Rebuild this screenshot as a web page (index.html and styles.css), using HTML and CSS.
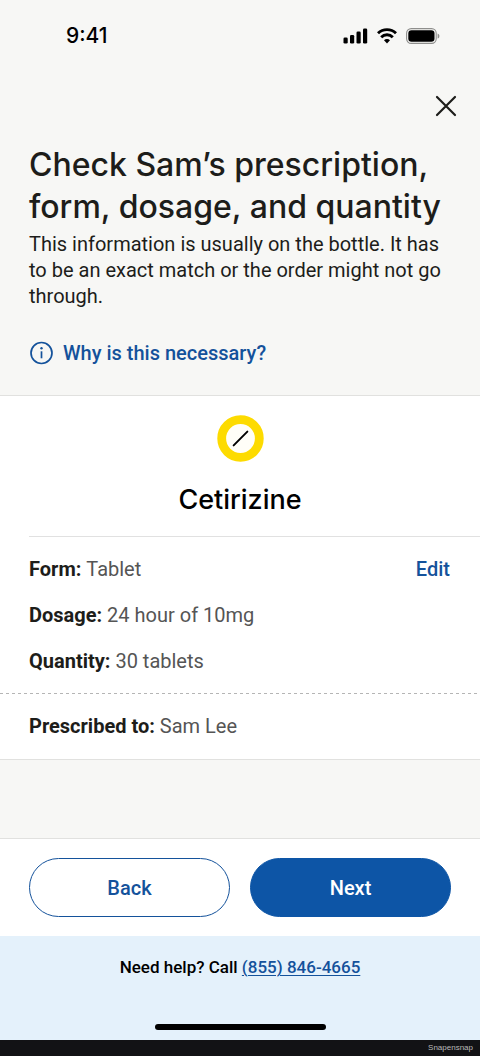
FILE: index.html
```html
<!DOCTYPE html>
<html lang="en">
<head>
<meta charset="utf-8">
<meta name="viewport" content="width=device-width, initial-scale=1">
<title>Check prescription</title>
<link rel="stylesheet" href="styles.css">
</head>
<body>
<div class="screen">
  <div class="status">
    <span class="time">9:41</span>
    <div class="status-icons">
      <svg width="25" height="16" viewBox="0 0 25 16" aria-hidden="true"><rect x="0.500" y="9.500" width="4.200" height="6" rx="1.300"/><rect x="7" y="7" width="4.200" height="8.500" rx="1.300"/><rect x="13.500" y="3.500" width="4.200" height="12" rx="1.300"/><rect x="20" y="0.500" width="4.200" height="15" rx="1.300"/></svg>
      <svg width="20" height="16" viewBox="0 0 20 16" aria-hidden="true"><g fill="none" stroke="#000" stroke-width="2.900"><path d="M1 5.300a12.800 12.800 0 0 1 18 0"/><path d="M4.200 9.200a8.200 8.200 0 0 1 11.600 0"/></g><path d="M7 12.200a4.200 4.200 0 0 1 6 0L10 15.400z"/></svg>
      <svg width="34" height="16" viewBox="0 0 34 16" aria-hidden="true"><rect x="0.600" y="0.600" width="29.600" height="14.800" rx="4.600" fill="none" stroke="#8f8f8d" stroke-width="1.100"/><rect x="2.300" y="2.300" width="26.200" height="11.400" rx="3.200"/><path d="M31.600 5.400c2.400.9 2.400 4.300 0 5.200z" fill="#8f8f8d"/></svg>
    </div>
  </div>
  <header class="intro">
    <button class="close" aria-label="Close"><svg width="22" height="22" viewBox="0 0 22 22" fill="none" stroke="#1d1d1a" stroke-width="2.200" stroke-linecap="round"><path d="M2 2l18 18M20 2L2 20"/></svg></button>
    <h1>Check Sam’s prescription, form, dosage, and quantity</h1>
    <p>This information is usually on the bottle. It has to be an exact match or the order might not go through.</p>
    <a class="why" href="#"><svg width="24" height="24" viewBox="0 0 24 24" fill="none" stroke="#14529b" aria-hidden="true"><circle cx="12.500" cy="12" r="10.500" stroke-width="1.700"/><path d="M12.500 10.300v7" stroke-width="1.700"/><circle cx="12.500" cy="7.300" r="1.200" fill="#14529b" stroke="none"/></svg>Why is this necessary?</a>
  </header>
  <main class="card">
    <div class="drug">
      <svg width="47" height="47" viewBox="0 0 48 48" aria-hidden="true"><circle cx="24" cy="24" r="19.200" fill="#fffef8" stroke="#fddb00" stroke-width="9"/><path d="M17 31L31 17" stroke="#000" stroke-width="2" stroke-linecap="round"/></svg>
      <h2>Cetirizine</h2>
    </div>
    <div class="details">
      <dl>
        <div><dt>Form:</dt> <dd>Tablet</dd></div>
        <div><dt>Dosage:</dt> <dd>24 hour of 10mg</dd></div>
        <div><dt>Quantity:</dt> <dd>30 tablets</dd></div>
      </dl>
      <a class="edit" href="#">Edit</a>
    </div>
    <svg class="dash" height="1" aria-hidden="true"><line x1="0" y1="0.500" x2="100%" y2="0.500" stroke="#b5b5b5" stroke-dasharray="3 3"/></svg>
    <dl class="patient"><div><dt>Prescribed to:</dt> <dd>Sam Lee</dd></div></dl>
  </main>
  <div class="actions">
    <button class="btn">Back</button>
    <button class="btn primary">Next</button>
  </div>
  <footer class="help">
    <p>Need help? Call <a href="tel:8558464665">(855) 846-4665</a></p>
    <div class="home"></div>
  </footer>
  <div class="credit">Snapensnap</div>
</div>
</body>
</html>
```

FILE: styles.css
```css
* { box-sizing: border-box; }
body, h1, h2, p, dl, dd { margin: 0; }
body {
  background: #f7f7f5;
  color: #1d1d1a;
  font: 20px/26px Roboto, "Liberation Sans", sans-serif;
}
.screen { display: flex; flex-direction: column; min-height: 100vh; }
.status {
  display: flex;
  align-items: center;
  justify-content: space-between;
  height: 72px;
  padding: 0 40px 0 66px;
}
.time { font: 500 21px/26px Inter, sans-serif; color: #000; }
.status-icons { display: flex; gap: 9px; }
.intro {
  display: flex;
  flex-direction: column;
  padding: 23px 29px 29px;
}
.close {
  align-self: flex-end;
  display: flex;
  margin-right: -6px;
  padding: 0;
  border: 0;
  background: none;
}
h1, h2 { font-family: Inter, sans-serif; font-weight: 500; }
h1 { margin: 27px -16px 0 0; font-size: 32px; line-height: 42px; }
.intro p { margin-top: 3px; }
a { color: #14529b; }
.why {
  display: flex;
  align-items: center;
  gap: 10px;
  margin-top: 31px;
  font-weight: 500;
  text-decoration: none;
}
.card {
  border: solid #e1e1df;
  border-width: 1px 0;
  background: #fff;
}
.drug {
  display: flex;
  flex-direction: column;
  align-items: center;
  gap: 20px;
  margin-left: 29px;
  padding: 19px 29px 18px 0;
  border-bottom: 1px solid #e1e1e1;
}
h2 { font-size: 27px; line-height: 36px; color: #000; }
.details {
  display: flex;
  justify-content: space-between;
  padding: 19px 30px 19px 29px;
}
.details dl { display: grid; gap: 20px; }
dt, dd { display: inline; }
dt { font-weight: 700; }
dd { color: #555; }
.edit { font-weight: 500; text-decoration: none; }
.dash { display: block; width: 100%; }
.patient { padding: 19px 29px 20px; }
.actions {
  display: flex;
  gap: 20px;
  margin-top: auto;
  padding: 19px 29px;
  border-top: 1px solid #e1e1df;
  background: #fff;
}
.btn {
  flex: 1;
  height: 59px;
  border: 1px solid #14529b;
  border-radius: 30px;
  background: #fff;
  color: #14529b;
  font: inherit;
  font-weight: 500;
}
.primary { border-color: #0d55a6; background: #0d55a6; color: #fff; }
.help {
  display: flex;
  flex-direction: column;
  align-items: center;
  justify-content: space-between;
  height: 104px;
  padding: 18px 30px 10px;
  background: #e4f1fb;
  color: #000;
  font-size: 17px;
  font-weight: 500;
}
.help a { text-underline-offset: 2px; text-decoration-thickness: 1px; }
.home { width: 171px; height: 6px; border-radius: 3px; background: #000; }
.credit {
  padding-right: 7px;
  background: #121215;
  color: #b9b9b9;
  font: 8px/16px "Liberation Sans", sans-serif;
  text-align: right;
}
```
